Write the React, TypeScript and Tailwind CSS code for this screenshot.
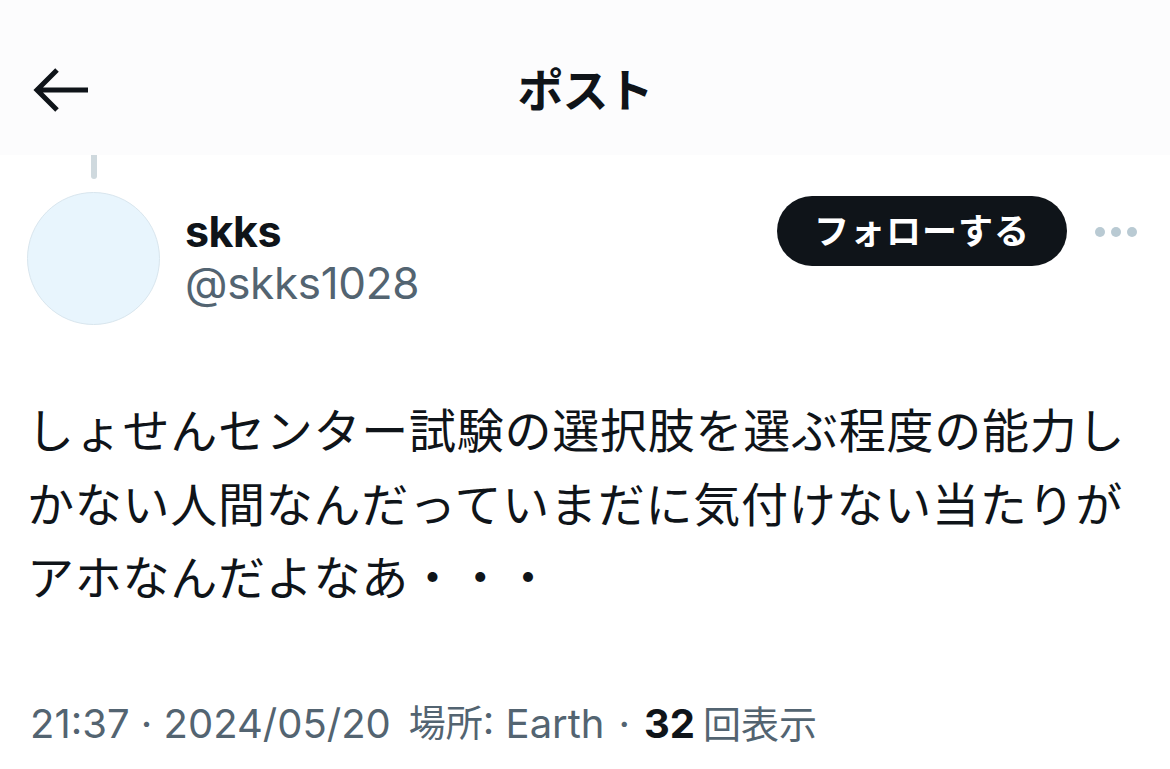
import React from 'react';

const BackArrow = () => (
  <svg width="58" height="46" viewBox="0 0 58 46" fill="none">
    <path d="M56 23H5M25 3L5 23l20 20" stroke="#0f1419" strokeWidth="5" strokeLinecap="butt" strokeLinejoin="miter" />
  </svg>
);

const App: React.FC = () => {
  return (
    <div className="w-[1170px] h-[769px] overflow-hidden bg-white text-[#0f1419] font-['Inter','Noto_Sans_CJK_JP',sans-serif]">
      {/* Header */}
      <div className="relative h-[155px] bg-[#fcfcfd] flex items-center justify-center">
        <button className="absolute left-[32px] top-[67px]">
          <BackArrow />
        </button>
        <h1 className="text-[46px] font-bold leading-none tracking-[-1px] mt-[24px]">ポスト</h1>
      </div>

      {/* Author */}
      <div className="flex px-[27px]">
        <div className="flex flex-col items-center w-[133px]">
          <div className="w-[6px] h-[24px] bg-[#cfd9de] rounded-b-full" />
          <div className="mt-[13px] w-[133px] h-[133px] rounded-full bg-[#e8f5fd] border border-[#d9e6ee]" />
        </div>
        <div className="ml-[25px] mt-[50px] flex-1 flex flex-col">
          <span className="text-[43px] font-bold leading-[52px] tracking-[-0.5px]">skks</span>
          <span className="text-[44px] leading-[52px] text-[#536471] tracking-[-0.3px]">@skks1028</span>
        </div>
        <div className="mt-[41px] flex items-start">
          <button className="h-[70px] px-[37px] rounded-full bg-[#0f1419] text-white text-[35px] font-bold leading-none tracking-[1px]">
            フォローする
          </button>
          <div className="ml-[28px] mt-[31px] mr-[6px] flex gap-[6px]">
            <span className="w-[10px] h-[10px] rounded-full bg-[#b9cad3]" />
            <span className="w-[10px] h-[10px] rounded-full bg-[#b9cad3]" />
            <span className="w-[10px] h-[10px] rounded-full bg-[#b9cad3]" />
          </div>
        </div>
      </div>

      {/* Body */}
      <p className="mt-[69px] pl-[27px] pr-[20px] text-[47px] leading-[73.5px] tracking-[0.75px]">
        しょせんセンター試験の選択肢を選ぶ程度の能力しかない人間なんだっていまだに気付けない当たりがアホなんだよなあ・・・
      </p>

      {/* Meta */}
      <div className="mt-[89px] px-[30px] text-[40px] leading-none text-[#536471] flex items-center">
        <span>21:37 · 2024/05/20</span>
        <span className="ml-[18px] text-[37px]">場所</span>
        <span>: Earth</span>
        <span className="ml-[14px]">·</span>
        <span className="ml-[14px] font-bold text-[#0f1419]">32</span>
        <span className="ml-[8px] text-[38px]">回表示</span>
      </div>
    </div>
  );
};

export default App;
